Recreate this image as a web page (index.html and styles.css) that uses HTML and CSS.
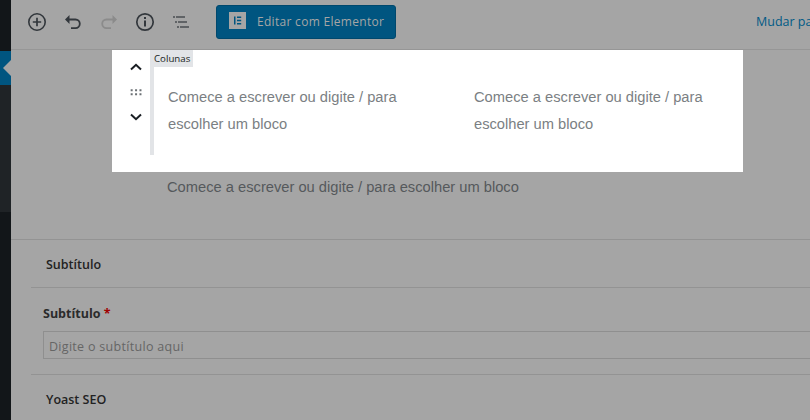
FILE: index.html
```html
<!DOCTYPE html>
<html lang="pt">
<head>
<meta charset="utf-8">
<title>Editor</title>
<link rel="stylesheet" href="styles.css">
</head>
<body>
<aside class="sidebar">
  <div class="side-top"></div>
  <div class="side-active"></div>
  <div class="side-mid"></div>
  <div class="side-rest"></div>
</aside>
<main class="main">
  <header class="toolbar">
    <div class="tools">
      <svg class="icon" viewBox="0 0 24 24"><circle cx="12" cy="12" r="8.200" fill="none" stroke="#32373c" stroke-width="1.600"/><path d="M12 7.800v8.400M7.800 12h8.400" stroke="#32373c" stroke-width="1.700" fill="none"/></svg>
      <svg class="icon" viewBox="0 0 24 24"><path d="M7.500 9.500h7a4.300 4.300 0 0 1 0 8.600H10" fill="none" stroke="#32373c" stroke-width="1.800"/><path d="M8.500 5v9L4 9.500z" fill="#32373c"/></svg>
      <svg class="icon" viewBox="0 0 24 24"><path d="M16.500 9.500h-7a4.300 4.300 0 0 0 0 8.600H14" fill="none" stroke="#8b8b8b" stroke-width="1.800"/><path d="M15.500 5v9L20 9.500z" fill="#8b8b8b"/></svg>
      <svg class="icon" viewBox="0 0 24 24"><circle cx="12" cy="12" r="8.200" fill="none" stroke="#32373c" stroke-width="1.700"/><path d="M12 10.500v6M12 7v2" stroke="#32373c" stroke-width="2" fill="none"/></svg>
      <svg class="icon" viewBox="0 0 24 24"><path d="M4 7h2M7 7h9M6 12h2M9 12h9M8 17h2M11 17h9" stroke="#4a4e52" stroke-width="1.300" fill="none"/></svg>
    </div>
    <a class="edit-btn">
      <svg class="el-logo" viewBox="0 0 17 17"><rect width="17" height="17" fill="#a5a5a5"/><path d="M5 4.500h1.500v8H5zM8 4.500h4.200v1.400H8zM8 7.800h4.200v1.400H8zM8 11.100h4.200v1.400H8z" fill="#005580"/></svg>
      <span>Editar com Elementor</span>
    </a>
    <a class="switch">Mudar pa</a>
  </header>
  <section class="editor">
    <div class="columns-block">
      <div class="movers">
        <svg class="chev" viewBox="0 0 14 14"><path d="M2 9.500 7 4.800l5 4.700" fill="none" stroke="#191e23" stroke-width="2"/></svg>
        <svg class="grip" viewBox="0 0 10 6"><path d="M1 1h1.500v1.500H1zM4.300 1h1.500v1.500H4.300zM7.600 1h1.500v1.500H7.600zM1 4h1.500v1.500H1zM4.300 4h1.500v1.500H4.300zM7.600 4h1.500v1.500H7.600z" fill="#6c7175"/></svg>
        <svg class="chev" viewBox="0 0 14 14"><path d="M2 4.500 7 9.200l5-4.700" fill="none" stroke="#191e23" stroke-width="2"/></svg>
      </div>
      <div class="block-body">
        <span class="block-tag">Colunas</span>
        <div class="cols">
          <p class="col-text">Comece a escrever ou digite / para escolher um bloco</p>
          <p class="col-text">Comece a escrever ou digite / para escolher um bloco</p>
        </div>
      </div>
    </div>
    <p class="appender">Comece a escrever ou digite / para escolher um bloco</p>
  </section>
  <section class="metaboxes">
    <h2 class="meta-title">Subtítulo</h2>
    <div class="field">
      <label class="field-label">Subtítulo <span class="req">*</span></label>
      <div class="field-input">Digite o subtítulo aqui</div>
    </div>
    <h2 class="meta-title last">Yoast SEO</h2>
  </section>
</main>
</body>
</html>
```
FILE: styles.css
```css
* { box-sizing: border-box; }
html, body { margin: 0; height: 420px; overflow: hidden; }
body { display: flex; width: 810px; background: #a5a5a5; font-family: "Open Sans", "Liberation Sans", sans-serif; }
.sidebar { width: 11px; flex: none; display: flex; flex-direction: column; }
.side-top { height: 51px; background: #121619; }
.side-active { height: 34px; background: #005580; position: relative; }
.side-active::after { content: ""; position: absolute; right: 0; top: 9px; border: 8px solid transparent; border-left-width: 0; border-right-color: #a5a5a5; }
.side-mid { height: 127px; background: #1f2326; }
.side-rest { flex: 1; background: #121619; }
.main { width: 799px; flex: none; display: flex; flex-direction: column; overflow: hidden; }
.toolbar { height: 50px; flex: none; display: flex; align-items: center; border-bottom: 1px solid #969696; padding: 0 0 6px 14px; white-space: nowrap; }
.tools { display: flex; gap: 12px; flex: none; }
.icon { width: 24px; height: 24px; display: block; }
.edit-btn { flex: none; margin-left: 23px; width: 180px; height: 34px; background: #005580; border-radius: 3px; border: 1px solid #00486d; display: flex; align-items: center; padding-left: 12px; color: #a5a5a5; font-size: 12px; letter-spacing: .3px; }
.el-logo { flex: none; width: 17px; height: 17px; margin-right: 11px; position: relative; top: -1px; }
.switch { margin-left: 360px; color: #005a85; font-size: 12.500px; }
.editor { display: flex; flex-direction: column; flex: none; height: 190px; border-bottom: 1px solid #939393; }
.columns-block { margin-left: 101px; width: 631px; height: 122px; background: #fff; display: flex; flex: none; }
.movers { width: 38px; padding: 10px 0 0 10px; display: flex; flex-direction: column; align-items: center; flex: none; }
.chev { width: 14px; height: 14px; }
.grip { width: 14px; height: 8px; margin: 14px 0 14px; }
.block-body { width: 593px; height: 105px; border-left: 4px solid #e2e4e7; position: relative; }
.block-tag { position: absolute; left: -2px; top: 0; height: 17px; padding: 0 3px 0 2px; width: 41px; background: #e2e4e7; font: 9.700px/17px "Open Sans", sans-serif; color: #191e23; }
.cols { display: flex; padding: 34px 0 0 14px; }
.col-text { margin: 0 46px 0 0; width: 260px; flex: none; font: 14.700px/27px "Liberation Sans", sans-serif; color: #7b7f83; }
.appender { margin: 5px 0 0 156px; font: 14.700px/20px "Liberation Sans", sans-serif; color: #55595c; }
.metaboxes { display: flex; flex-direction: column; flex: none; }
.meta-title { margin: 0 0 0 20px; height: 48px; padding: 2px 0 0 15px; border-bottom: 1px solid #939393; font-size: 12.500px; line-height: 46px; font-weight: 600; color: #222; }
.meta-title.last { border: 0; }
.field { margin-left: 20px; height: 87px; border-bottom: 1px solid #939393; padding: 18px 0 0 12px; }
.field-label { display: block; font-size: 12.500px; line-height: 16px; font-weight: 700; color: #2b2b2b; }
.req { color: #a00000; }
.field-input { margin-top: 9px; width: 800px; height: 28px; border: 1px solid #8f8f8f; padding: 1px 0 0 5px; font-size: 12.500px; line-height: 27px; color: #666; letter-spacing: .3px; }
```
